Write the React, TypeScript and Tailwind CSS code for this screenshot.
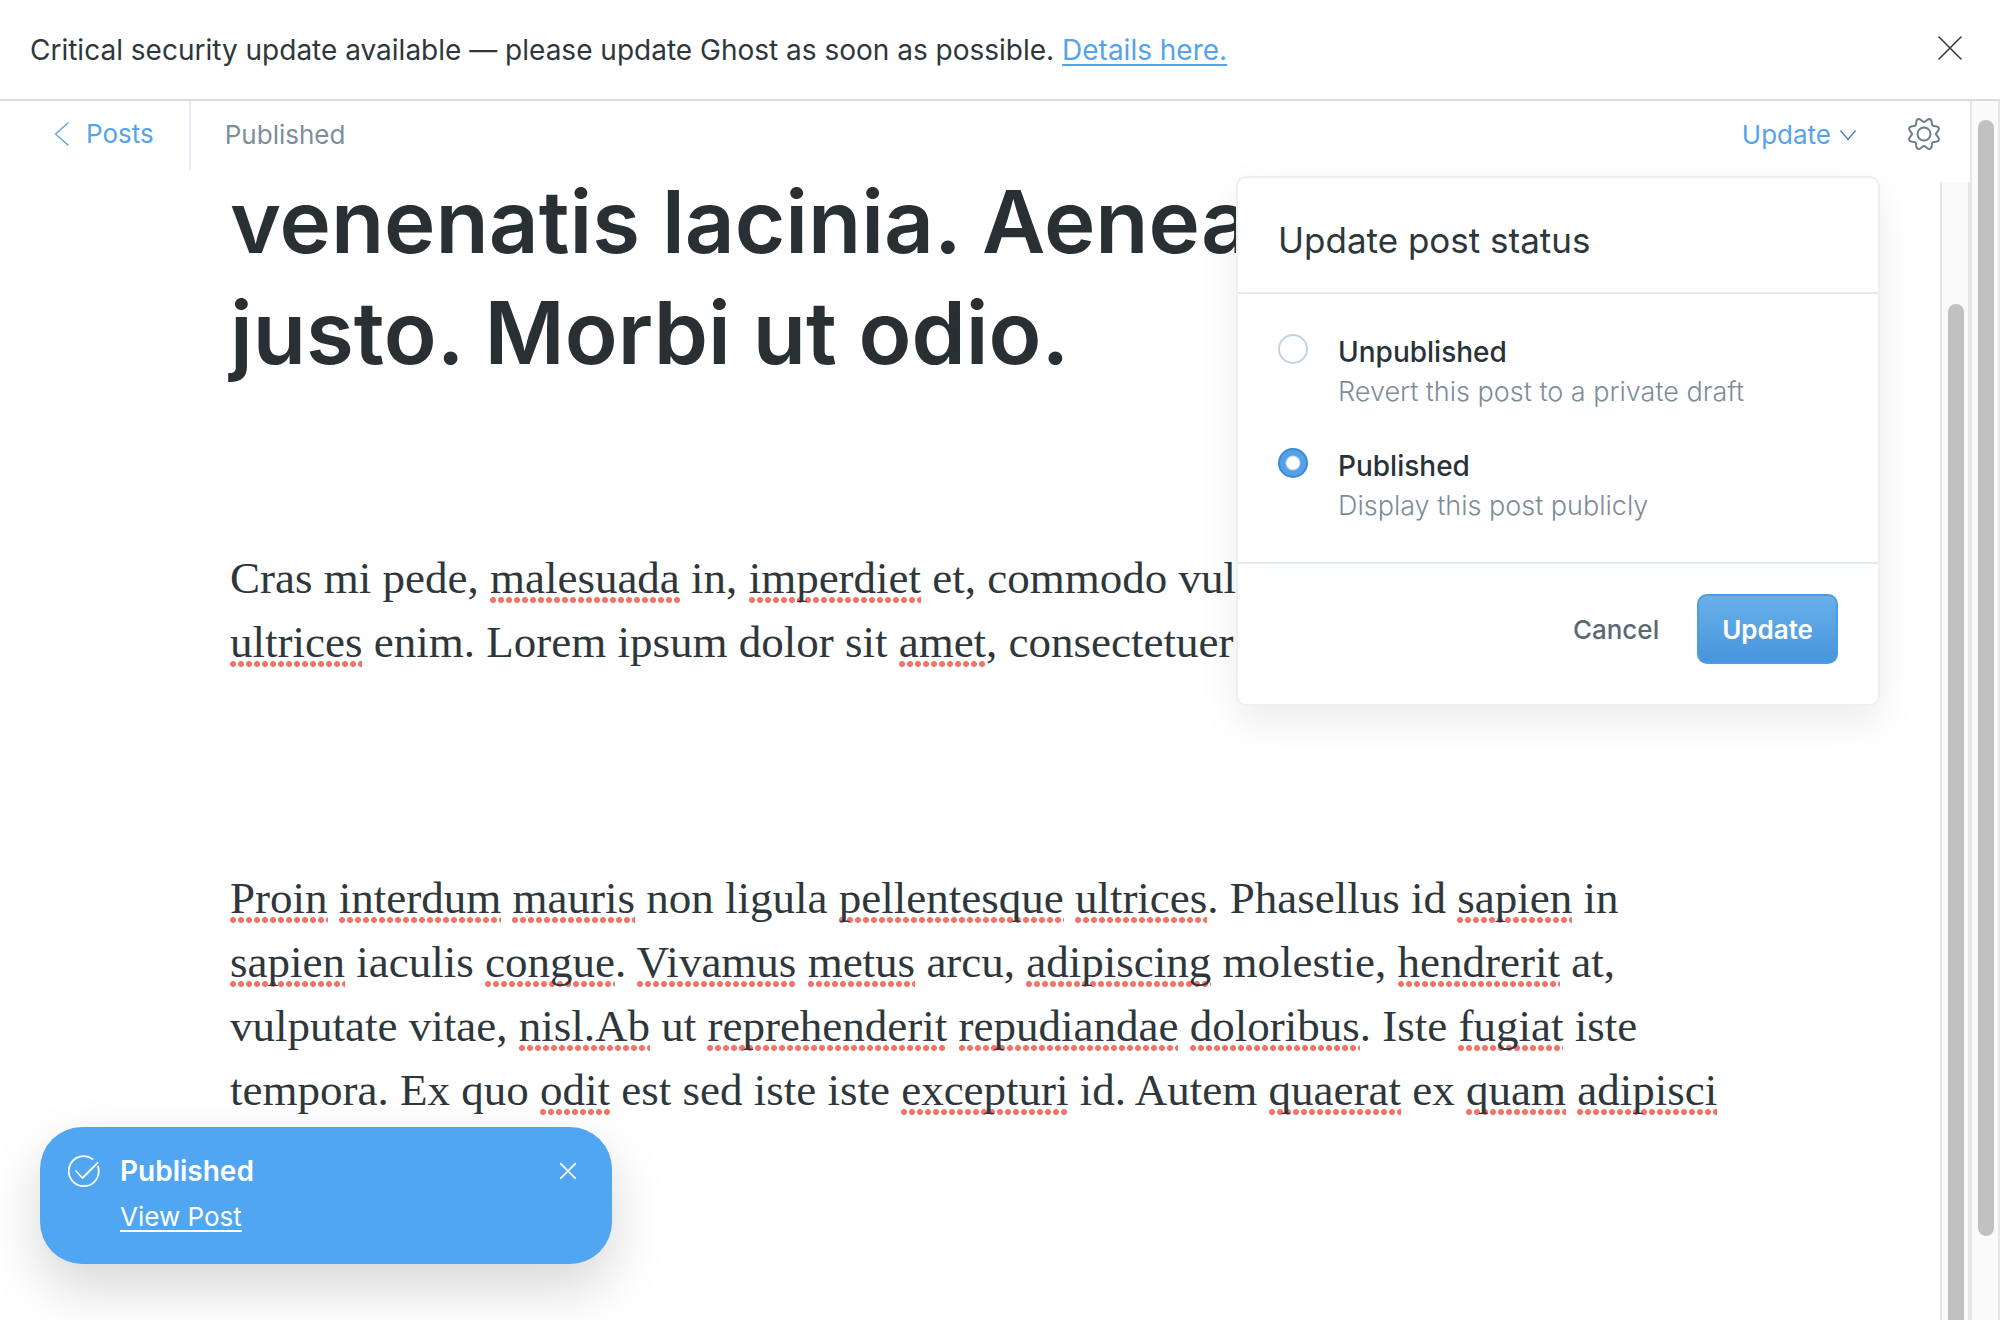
import React from "react";

function CloseIcon({ className, weight }: { className: string; weight: number }) {
  return (
    <svg viewBox="0 0 24 24" fill="none" stroke="currentColor" strokeWidth={weight} strokeLinecap="round" className={className} aria-hidden="true">
      <path d="M1 1l22 22M23 1L1 23" />
    </svg>
  );
}

/* Eight rounded teeth: the radius swings between notch and tip as the outline goes round. */
const gearOutline =
  "M" +
  Array.from({ length: 128 }, (_, i) => {
    const t = (i / 128) * Math.PI * 2;
    const r = 14 - 2 * Math.cos(8 * t);
    return `${(17 + r * Math.sin(t)).toFixed(2)} ${(17 - r * Math.cos(t)).toFixed(2)}`;
  }).join("L") +
  "Z";

function Typo({ children }: { children: string }) {
  return (
    <span className="bg-[radial-gradient(circle_at_3px_3px,#f0756a_0,#f0756a_2.6px,transparent_3.4px)] bg-[length:8px_6px] bg-bottom-left bg-repeat-x">
      {children}
    </span>
  );
}

/* Words wrapped in [brackets] carry the spell-check underline. */
function Line({ text }: { text: string }) {
  return (
    <span className="block whitespace-nowrap">
      {text.split(/(\[[^\]]+\])/).map((part, i) =>
        part.startsWith("[") ? <Typo key={i}>{part.slice(1, -1)}</Typo> : part
      )}
    </span>
  );
}

function Option({ id, title, note, checked }: { id: string; title: string; note: string; checked?: boolean }) {
  return (
    <label htmlFor={id} className="flex gap-[30px]">
      <input
        type="radio"
        id={id}
        name="status"
        defaultChecked={checked}
        className="mt-0.5 size-[30px] shrink-0 appearance-none rounded-full border-2 border-[#c0d4e4] bg-white checked:border-[#3d8ad8] checked:bg-[radial-gradient(circle,#fff_6px,#55a1e6_8px)]"
      />
      <span className="flex flex-col">
        <span className="text-[28px] leading-10 font-medium text-[#293238]">{title}</span>
        <span className="text-[27px] leading-10 font-light text-[#7d8d98]">{note}</span>
      </span>
    </label>
  );
}

export default function App() {
  return (
    <div className="relative flex h-screen flex-col overflow-hidden bg-white font-[Inter,sans-serif] text-[#2d373c]">
      <div className="flex h-[101px] shrink-0 items-center justify-between border-b-2 border-[#dadddd] pr-[38px] pl-[30px]">
        <p className="text-[28px]">
          Critical security update available — please update Ghost as soon as possible.{" "}
          <a href="#details" className="text-[#55a3e8] underline decoration-2 underline-offset-4">Details here.</a>
        </p>
        <button type="button" aria-label="Dismiss" className="mb-1"><CloseIcon className="size-6" weight={1.5} /></button>
      </div>

      <div className="flex min-h-0 flex-1">
        <div className="relative flex min-w-0 flex-1 flex-col">
          <header className="z-10 flex h-[81px] shrink-0 items-start bg-white text-[26px]">
            <a href="#posts" className="flex h-[69px] items-center gap-4 border-r-2 border-[#e3eaf0] pr-[35px] pb-1 pl-[54px] text-[#55a3e8]">
              <svg viewBox="0 0 16 30" fill="none" stroke="currentColor" strokeWidth="1.300" className="h-[30px] w-4" aria-hidden="true">
                <path d="M14.500 3.500L1.500 15L14.500 26.500" />
              </svg>
              Posts
            </a>
            <span className="flex h-[69px] items-center pb-0.5 pl-[34px] text-[#7c8f9b]">Published</span>
            <div className="ml-auto flex h-[69px] items-center gap-[50px] pr-[29px] pb-0.5">
              <button type="button" className="flex items-center gap-2 text-[#55a3e8]">
                Update
                <svg viewBox="0 0 18 12" fill="none" stroke="#4a7fb5" strokeWidth="1.400" className="h-3 w-[18px]" aria-hidden="true">
                  <path d="M1.500 1.500L9 10.500L16.500 1.500" />
                </svg>
              </button>
              <button type="button" aria-label="Settings" className="pb-0.5 text-[#6b7f8a]">
                <svg viewBox="0 0 34 34" fill="none" stroke="currentColor" strokeWidth="2" strokeLinejoin="round" className="size-[34px]" aria-hidden="true">
                  <circle cx="17" cy="17" r="6.500" />
                  <path d={gearOutline} />
                </svg>
              </button>
            </div>
          </header>

          <div className="flex min-h-0 flex-1">
            <main className="min-w-0 flex-1 overflow-hidden pl-[230px]">
              <h1 className="-mt-4 text-[87px] leading-[111px] font-semibold text-[#293034]">
                <Line text="venenatis lacinia. Aenean sit" />
                <Line text="justo. Morbi ut odio." />
              </h1>
              <div className="mt-[158px] flex flex-col gap-48 font-['Liberation_Serif',serif] text-[45px] leading-[64px]">
                <p>
                  <Line text="Cras mi pede, [malesuada] in, [imperdiet] et, commodo vulputate, justo." />
                  <Line text="[ultrices] enim. Lorem ipsum dolor sit [amet], consectetuer [adipiscing] elit." />
                </p>
                <p>
                  <Line text="[Proin] [interdum] [mauris] non ligula [pellentesque] [ultrices]. Phasellus id [sapien] in" />
                  <Line text="[sapien] iaculis [congue]. [Vivamus] [metus] arcu, [adipiscing] molestie, [hendrerit] at," />
                  <Line text="vulputate vitae, [nisl.Ab] ut [reprehenderit] [repudiandae] [doloribus]. Iste [fugiat] iste" />
                  <Line text="tempora. Ex quo [odit] est sed iste iste [excepturi] id. Autem [quaerat] ex [quam] [adipisci]" />
                </p>
              </div>
            </main>
            <div className="w-[30px] border-x-2 border-[#e6e6e6] bg-[#fafafa] pt-[122px] pr-1 pl-1.5">
              <div className="h-full rounded-t-full bg-[#c1c1c1]" />
            </div>
          </div>

          <section className="absolute top-[75px] right-[90px] z-20 w-[644px] rounded-[10px] border-2 border-[#eeefef] bg-white shadow-[0_16px_40px_rgba(0,0,0,0.08)]">
            <h2 className="border-b-2 border-[#e3ebf2] px-10 pt-[42px] pb-8 text-[35px] leading-10">Update post status</h2>
            <div className="flex flex-col gap-[34px] border-b-2 border-[#e3ebf2] px-10 pt-[38px] pb-9">
              <Option id="unpublished" title="Unpublished" note="Revert this post to a private draft" />
              <Option id="published" title="Published" note="Display this post publicly" checked />
            </div>
            <div className="flex items-center justify-end gap-[38px] px-10 pt-[30px] pb-10 text-[26px]">
              <button type="button" className="font-medium text-[#586a74]">Cancel</button>
              <button type="button" className="h-[70px] rounded-[10px] border-2 border-[#4f9de0] bg-linear-to-b from-[#69b0ea] to-[#4795db] px-[23px] font-semibold text-white">Update</button>
            </div>
          </section>
        </div>

        <div className="w-[30px] border-x-2 border-[#e6e6e6] bg-[#fafafa] pt-[19px] pr-1 pl-1.5">
          <div className="h-[93%] rounded-full bg-[#c1c1c1]" />
        </div>
      </div>

      <aside className="absolute bottom-14 left-10 z-30 flex h-[137px] w-[572px] gap-5 rounded-[42px] bg-[#51a6f2] px-7 pt-6 text-white shadow-[0_24px_56px_rgba(0,0,0,0.16)]">
        <svg viewBox="0 0 32 32" fill="none" stroke="currentColor" strokeWidth="1.800" strokeLinecap="round" strokeLinejoin="round" className="mt-1 size-8 shrink-0" aria-hidden="true">
          <path d="M24.500 4A15 15 0 1 0 30 11.500M8 16l6.500 7L29.500 8" />
        </svg>
        <div className="flex flex-1 flex-col items-start">
          <strong className="text-[28px] leading-10 font-semibold">Published</strong>
          <a href="#view" className="mt-1.5 text-[26px] leading-10 underline decoration-2 underline-offset-4">View Post</a>
        </div>
        <button type="button" aria-label="Close" className="mt-3 mr-2 self-start"><CloseIcon className="size-4" weight={2.5} /></button>
      </aside>
    </div>
  );
}
